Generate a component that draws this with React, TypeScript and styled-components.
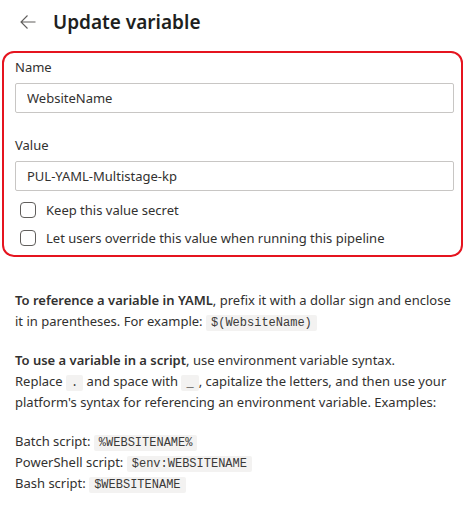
import React, { useState } from 'react';
import styled, { createGlobalStyle } from 'styled-components';

const GlobalStyle = createGlobalStyle`
    body {
        margin: 0;
        background: #ffffff;
        font-family: "Segoe UI", "Noto Sans", "Open Sans", sans-serif;
        color: #323130;
    }
`;

const Page = styled.div`
    width: 473px;
    min-height: 517px;
    background: #ffffff;
`;

const Header = styled.header`
    display: flex;
    align-items: center;
    gap: 17px;
    height: 44px;
    padding: 0 0 0 20px;
`;

const BackButton = styled.button`
    display: flex;
    align-items: center;
    justify-content: center;
    width: 16px;
    height: 16px;
    padding: 0;
    border: none;
    background: transparent;
    color: #605e5c;
    cursor: pointer;
`;

const Title = styled.h1`
    margin: 0;
    font-size: 19px;
    font-weight: 600;
    color: #201f1e;
`;

const FormPanel = styled.section`
    margin: 7px 0 0 2px;
    width: 461px;
    box-sizing: border-box;
    border: 2px solid #e5141f;
    border-radius: 12px;
    padding: 4px 7px 3px 11px;
`;

const Label = styled.label<{ $gapTop?: number }>`
    display: block;
    margin-top: ${({ $gapTop }) => $gapTop ?? 0}px;
    font-size: 13px;
    line-height: 20px;
    color: #323130;
`;

const TextInput = styled.input`
    display: block;
    width: 100%;
    height: 30px;
    box-sizing: border-box;
    margin-top: 6px;
    padding: 0 11px;
    border: 1px solid #c8c6c4;
    border-radius: 2px;
    font-family: inherit;
    font-size: 13px;
    color: #323130;
    outline: none;
`;

const CheckList = styled.div`
    margin-top: 5px;
`;

const CheckRow = styled.label`
    display: flex;
    align-items: center;
    gap: 10px;
    height: 28px;
    padding-left: 5px;
    font-size: 13px;
    color: #323130;
    cursor: pointer;
`;

const CheckBox = styled.span<{ $checked: boolean }>`
    width: 16px;
    height: 16px;
    box-sizing: border-box;
    border: 1px solid #605e5c;
    border-radius: 4px;
    background: ${({ $checked }) => ($checked ? '#0078d4' : '#ffffff')};
    flex-shrink: 0;
`;

const Help = styled.div`
    padding: 33px 18px 0 15px;
    font-size: 13px;
    line-height: 21px;
    color: #323130;

    strong {
        font-weight: 600;
    }
`;

const Para = styled.p`
    margin: 0 0 18px;
`;

const Code = styled.code`
    font-family: "Liberation Mono", "DejaVu Sans Mono", monospace;
    font-size: 12px;
    line-height: 16px;
    background: #f3f2f1;
    border-radius: 2px;
    padding: 1px 5px;
    color: #3b3a39;
`;

const Example = styled.div``;

const ArrowLeft = () => (
    <svg width="16" height="16" viewBox="0 0 16 16" fill="none" stroke="currentColor" strokeWidth="1.1">
        <path d="M15.5 8H1M7.5 1.5L1 8l6.5 6.5" />
    </svg>
);

const App: React.FC = () => {
    const [secret, setSecret] = useState(false);
    const [override, setOverride] = useState(false);

    return (
        <Page>
            <GlobalStyle />
            <Header>
                <BackButton aria-label="Back"><ArrowLeft /></BackButton>
                <Title>Update variable</Title>
            </Header>

            <FormPanel>
                <Label>Name</Label>
                <TextInput defaultValue="WebsiteName" />
                <Label $gapTop={22}>Value</Label>
                <TextInput defaultValue="PUL-YAML-Multistage-kp" />
                <CheckList>
                    <CheckRow onClick={() => setSecret(!secret)}>
                        <CheckBox $checked={secret} />
                        Keep this value secret
                    </CheckRow>
                    <CheckRow onClick={() => setOverride(!override)}>
                        <CheckBox $checked={override} />
                        Let users override this value when running this pipeline
                    </CheckRow>
                </CheckList>
            </FormPanel>

            <Help>
                <Para>
                    <strong>To reference a variable in YAML</strong>, prefix it with a dollar sign and enclose
                    it in parentheses. For example: <Code>$(WebsiteName)</Code>
                </Para>
                <Para>
                    <strong>To use a variable in a script</strong>, use environment variable syntax.
                    <br />
                    Replace <Code>.</Code> and space with <Code>_</Code>, capitalize the letters, and then use your
                    platform's syntax for referencing an environment variable. Examples:
                </Para>
                <Example>Batch script: <Code>%WEBSITENAME%</Code></Example>
                <Example>PowerShell script: <Code>$env:WEBSITENAME</Code></Example>
                <Example>Bash script: <Code>$WEBSITENAME</Code></Example>
            </Help>
        </Page>
    );
};

export default App;
